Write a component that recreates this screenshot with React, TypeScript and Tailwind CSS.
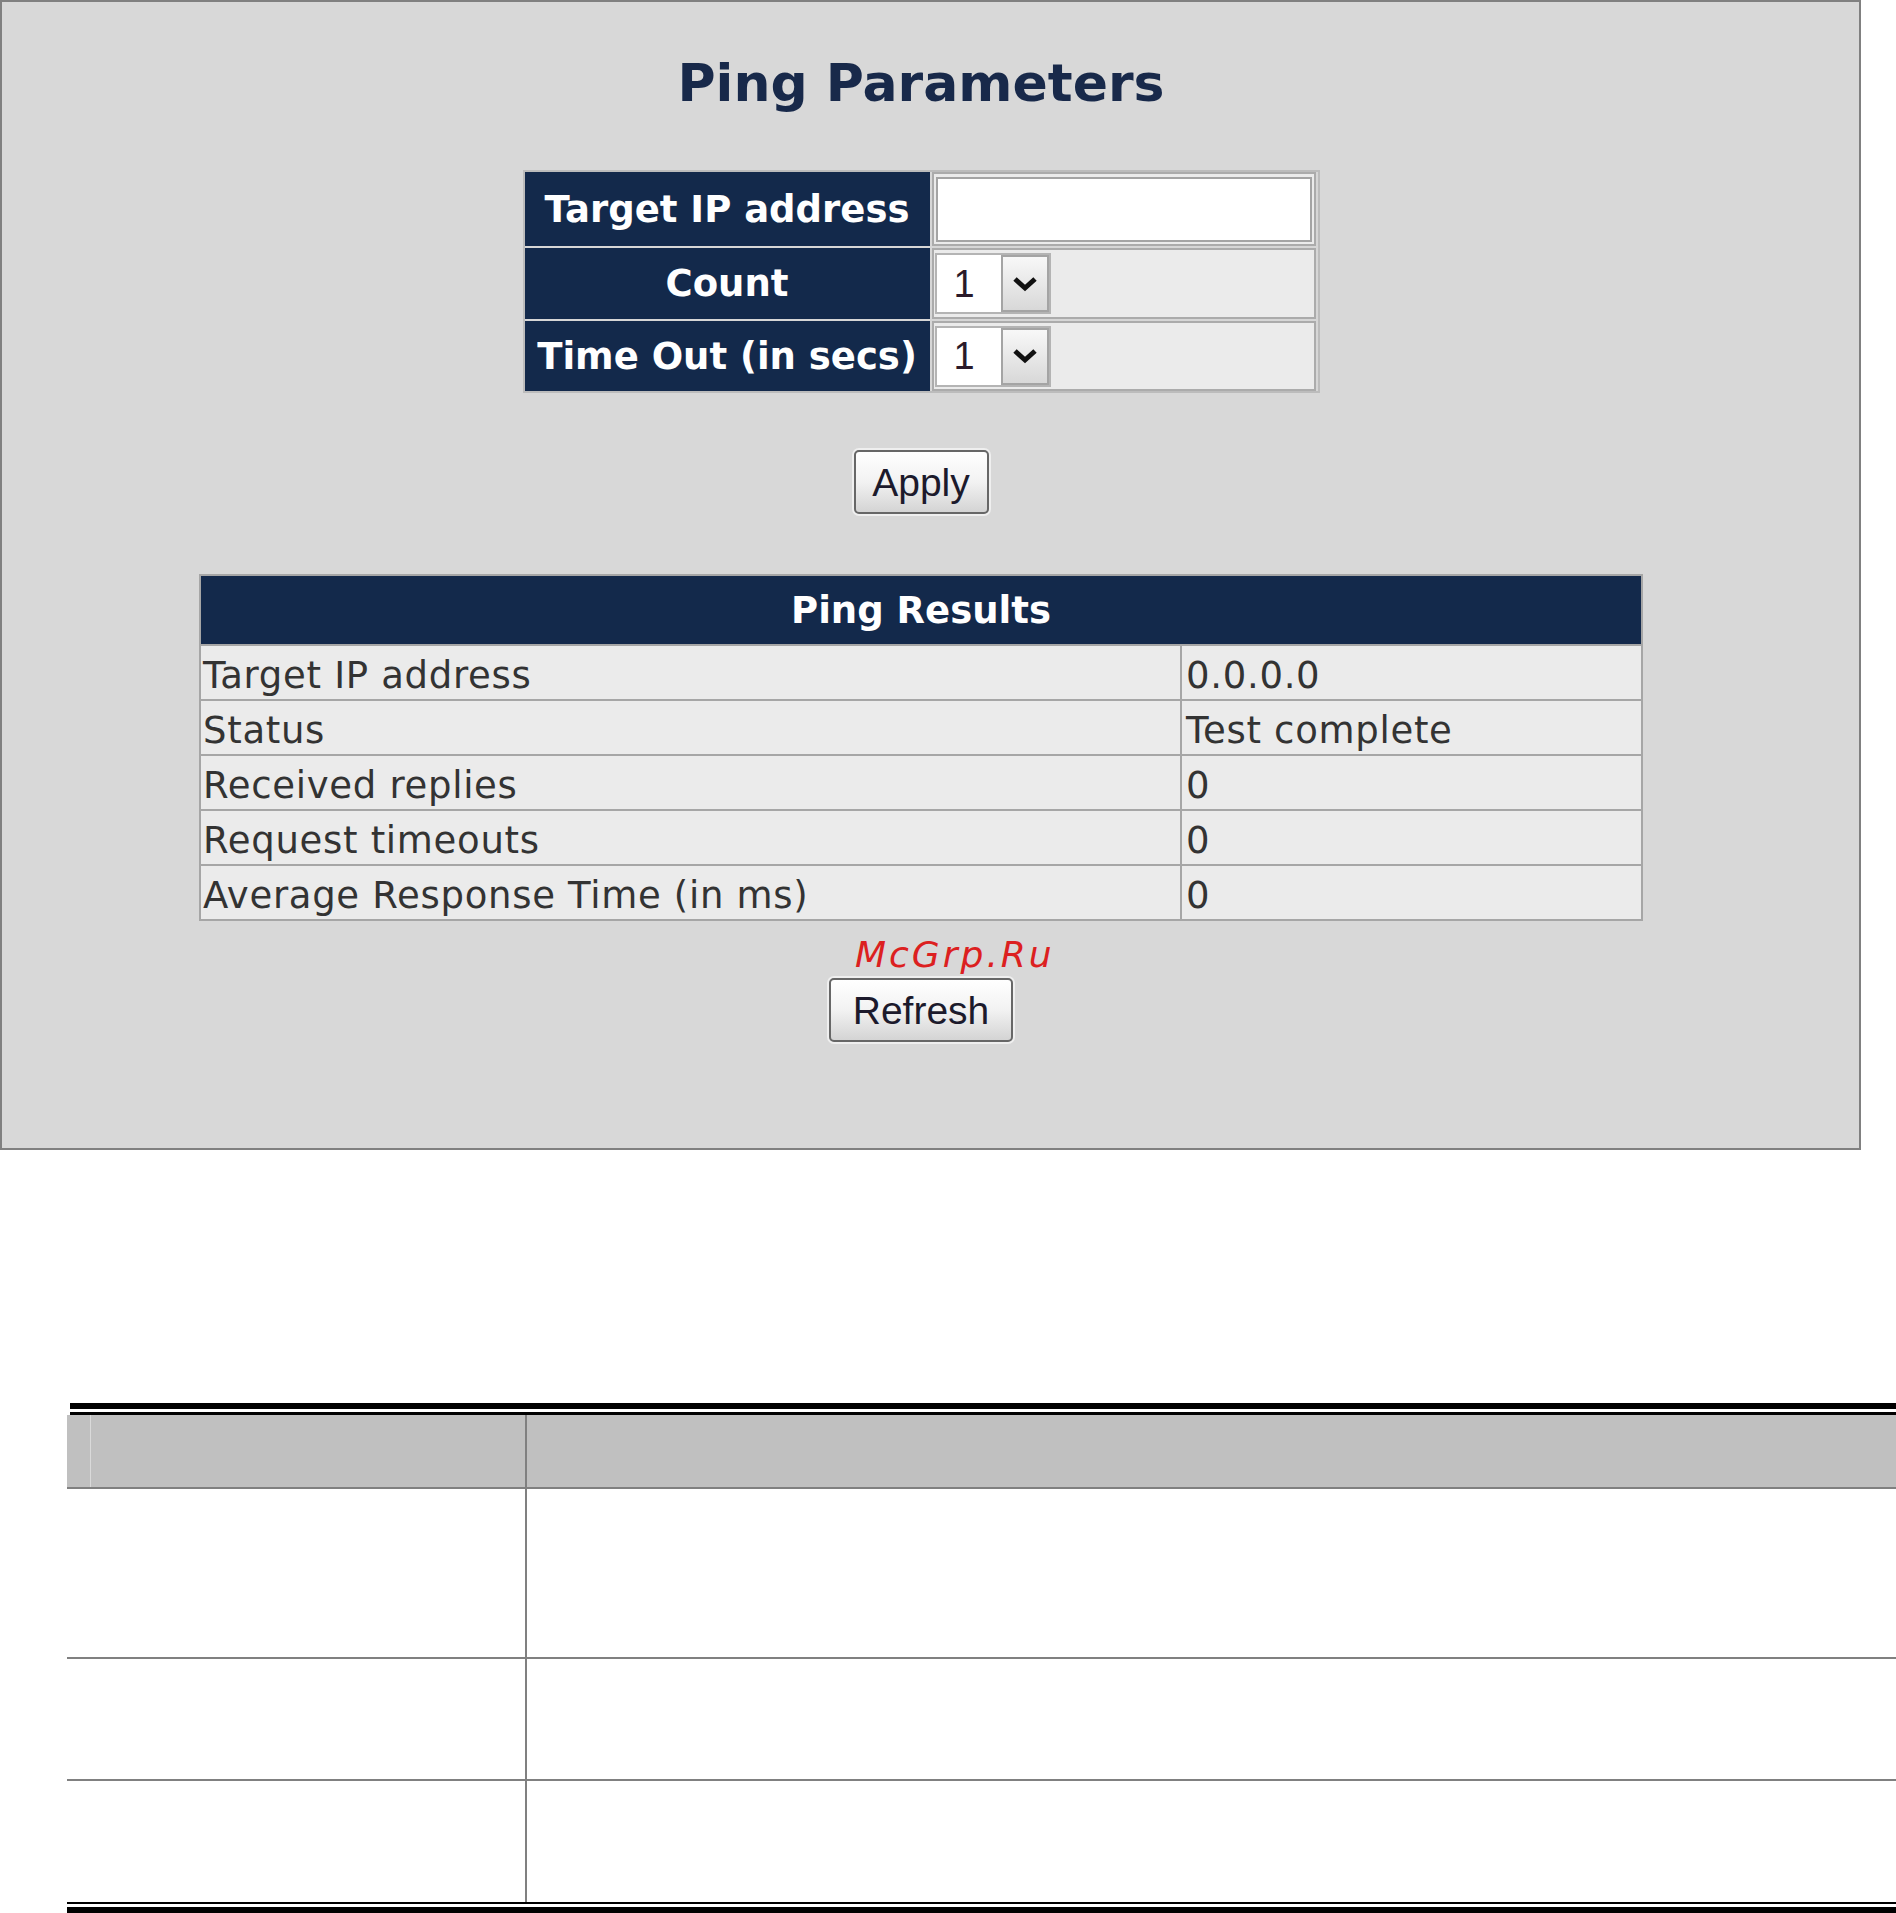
import React from "react";

const verdana = "font-['DejaVu_Sans',Verdana,sans-serif]";
const arial = "font-['Liberation_Sans',Arial,sans-serif]";

const results = [
  { label: "Target IP address", value: "0.0.0.0" },
  { label: "Status", value: "Test complete" },
  { label: "Received replies", value: "0" },
  { label: "Request timeouts", value: "0" },
  { label: "Average Response Time (in ms)", value: "0" },
];

function Chevron() {
  return (
    <svg width="26" height="16" viewBox="0 0 26 16" aria-hidden>
      <path d="M3 3 L13 12 L23 3" fill="none" stroke="#111" strokeWidth="5" strokeLinejoin="miter" />
    </svg>
  );
}

function Select({ value }: { value: string }) {
  return (
    <div className="flex h-[61px] w-[116px] border-2 border-[#b4b4b4] bg-white">
      <div className={`flex flex-1 items-center pl-[17px] text-[38px] leading-none text-[#2a1a2a] ${arial}`}>{value}</div>
      <div className="flex w-[48px] items-center justify-center border-2 border-[#a4a4a4] bg-linear-to-b from-[#f8f8f8] to-[#d8d8d8]">
        <Chevron />
      </div>
    </div>
  );
}

function Button({ children, w }: { children: React.ReactNode; w: string }) {
  return (
    <button
      type="button"
      className={`${w} h-[64px] rounded-[5px] border-2 border-[#676767] bg-linear-to-b from-white via-[#f2f2f2] to-[#d4d4d4] text-[39px] leading-none text-[#1c1a2c] shadow-[0_0_0_2px_#efefef] ${arial}`}
    >
      {children}
    </button>
  );
}

function Label({ children }: { children: React.ReactNode }) {
  return (
    <div className="flex items-center justify-center bg-[#13294b] text-[37px] leading-[37px] font-bold text-white">
      {children}
    </div>
  );
}

function Panel() {
  return (
    <section className={`relative flex h-[1150px] w-[1861px] flex-col items-center border-2 border-[#808080] bg-[#d8d8d8] pr-[19px] ${verdana}`}>
      <h1 className="mt-[51px] h-[61px] text-[52px] leading-[61px] font-bold text-[#18294a]">Ping Parameters</h1>

      <div className="mt-[56px] grid w-[797px] grid-cols-[405px_384px] grid-rows-[74px_71px_70px] gap-[2px] border-2 border-[#bcbcbc] bg-[#d6d6d6]">
        <Label>Target IP address</Label>
        <div className="flex items-center border-2 border-[#ababab] bg-[#ebebeb] px-[2px]">
          <div className="h-[65px] w-[377px] border-2 border-[#a4a4a4] bg-white" />
        </div>
        <Label>Count</Label>
        <div className="flex items-center border-2 border-[#ababab] bg-[#ebebeb] px-[1px]">
          <Select value="1" />
        </div>
        <Label>Time Out (in secs)</Label>
        <div className="flex items-center border-2 border-[#ababab] bg-[#ebebeb] px-[1px]">
          <Select value="1" />
        </div>
      </div>

      <div className="mt-[57px]">
        <Button w="w-[135px]">Apply</Button>
      </div>

      <div className="mt-[60px] w-[1444px] border-2 border-[#a6a6a6]">
        <div className="flex h-[68px] items-center justify-center bg-[#13294b] text-[37px] leading-[37px] font-bold text-white">
          Ping Results
        </div>
        {results.map((r) => (
          <div key={r.label} className="flex h-[55px] border-t-2 border-[#a6a6a6] bg-[#ebebeb] text-[37px] leading-[37px] tracking-[0.7px] text-[#333]">
            <div className="w-[981px] border-r-2 border-[#a6a6a6] pt-[11px] pl-[2px]">{r.label}</div>
            <div className="flex-1 pt-[11px] pl-[4px]">{r.value}</div>
          </div>
        ))}
      </div>

      <div className="mt-[57px]">
        <Button w="w-[184px]">Refresh</Button>
      </div>

      <div className="absolute left-[853px] top-[933px] text-[36px] leading-[40px] tracking-[3px] text-[#dc2020] italic">
        McGrp.Ru
      </div>
    </section>
  );
}

function DescTable() {
  return (
    <div className="mt-[253px] ml-[67px] w-[1829px]">
      <div className="ml-[3px] h-[6px] bg-black" />
      <div className="h-[3px]" />
      <div className="ml-[3px] h-[3px] bg-black" />
      <div className="flex h-[74px] border-b-2 border-[#808080] bg-[#c0c0c0]">
        <div className="w-[24px] border-r border-[#dadada]" />
        <div className="w-[436px] border-r-2 border-[#808080]" />
        <div className="flex-1" />
      </div>
      {["h-[170px]", "h-[122px]"].map((h) => (
        <div key={h} className={`flex ${h} border-b-2 border-[#808080]`}>
          <div className="w-[460px] border-r-2 border-[#808080]" />
          <div className="flex-1" />
        </div>
      ))}
      <div className="flex h-[121px]">
        <div className="w-[460px] border-r-2 border-[#808080]" />
        <div className="flex-1" />
      </div>
      <div className="h-[2px] bg-black" />
      <div className="h-[3px]" />
      <div className="h-[6px] bg-black" />
    </div>
  );
}

export default function App() {
  return (
    <div className="h-[1913px] w-[1896px] overflow-hidden bg-white">
      <Panel />
      <DescTable />
    </div>
  );
}
